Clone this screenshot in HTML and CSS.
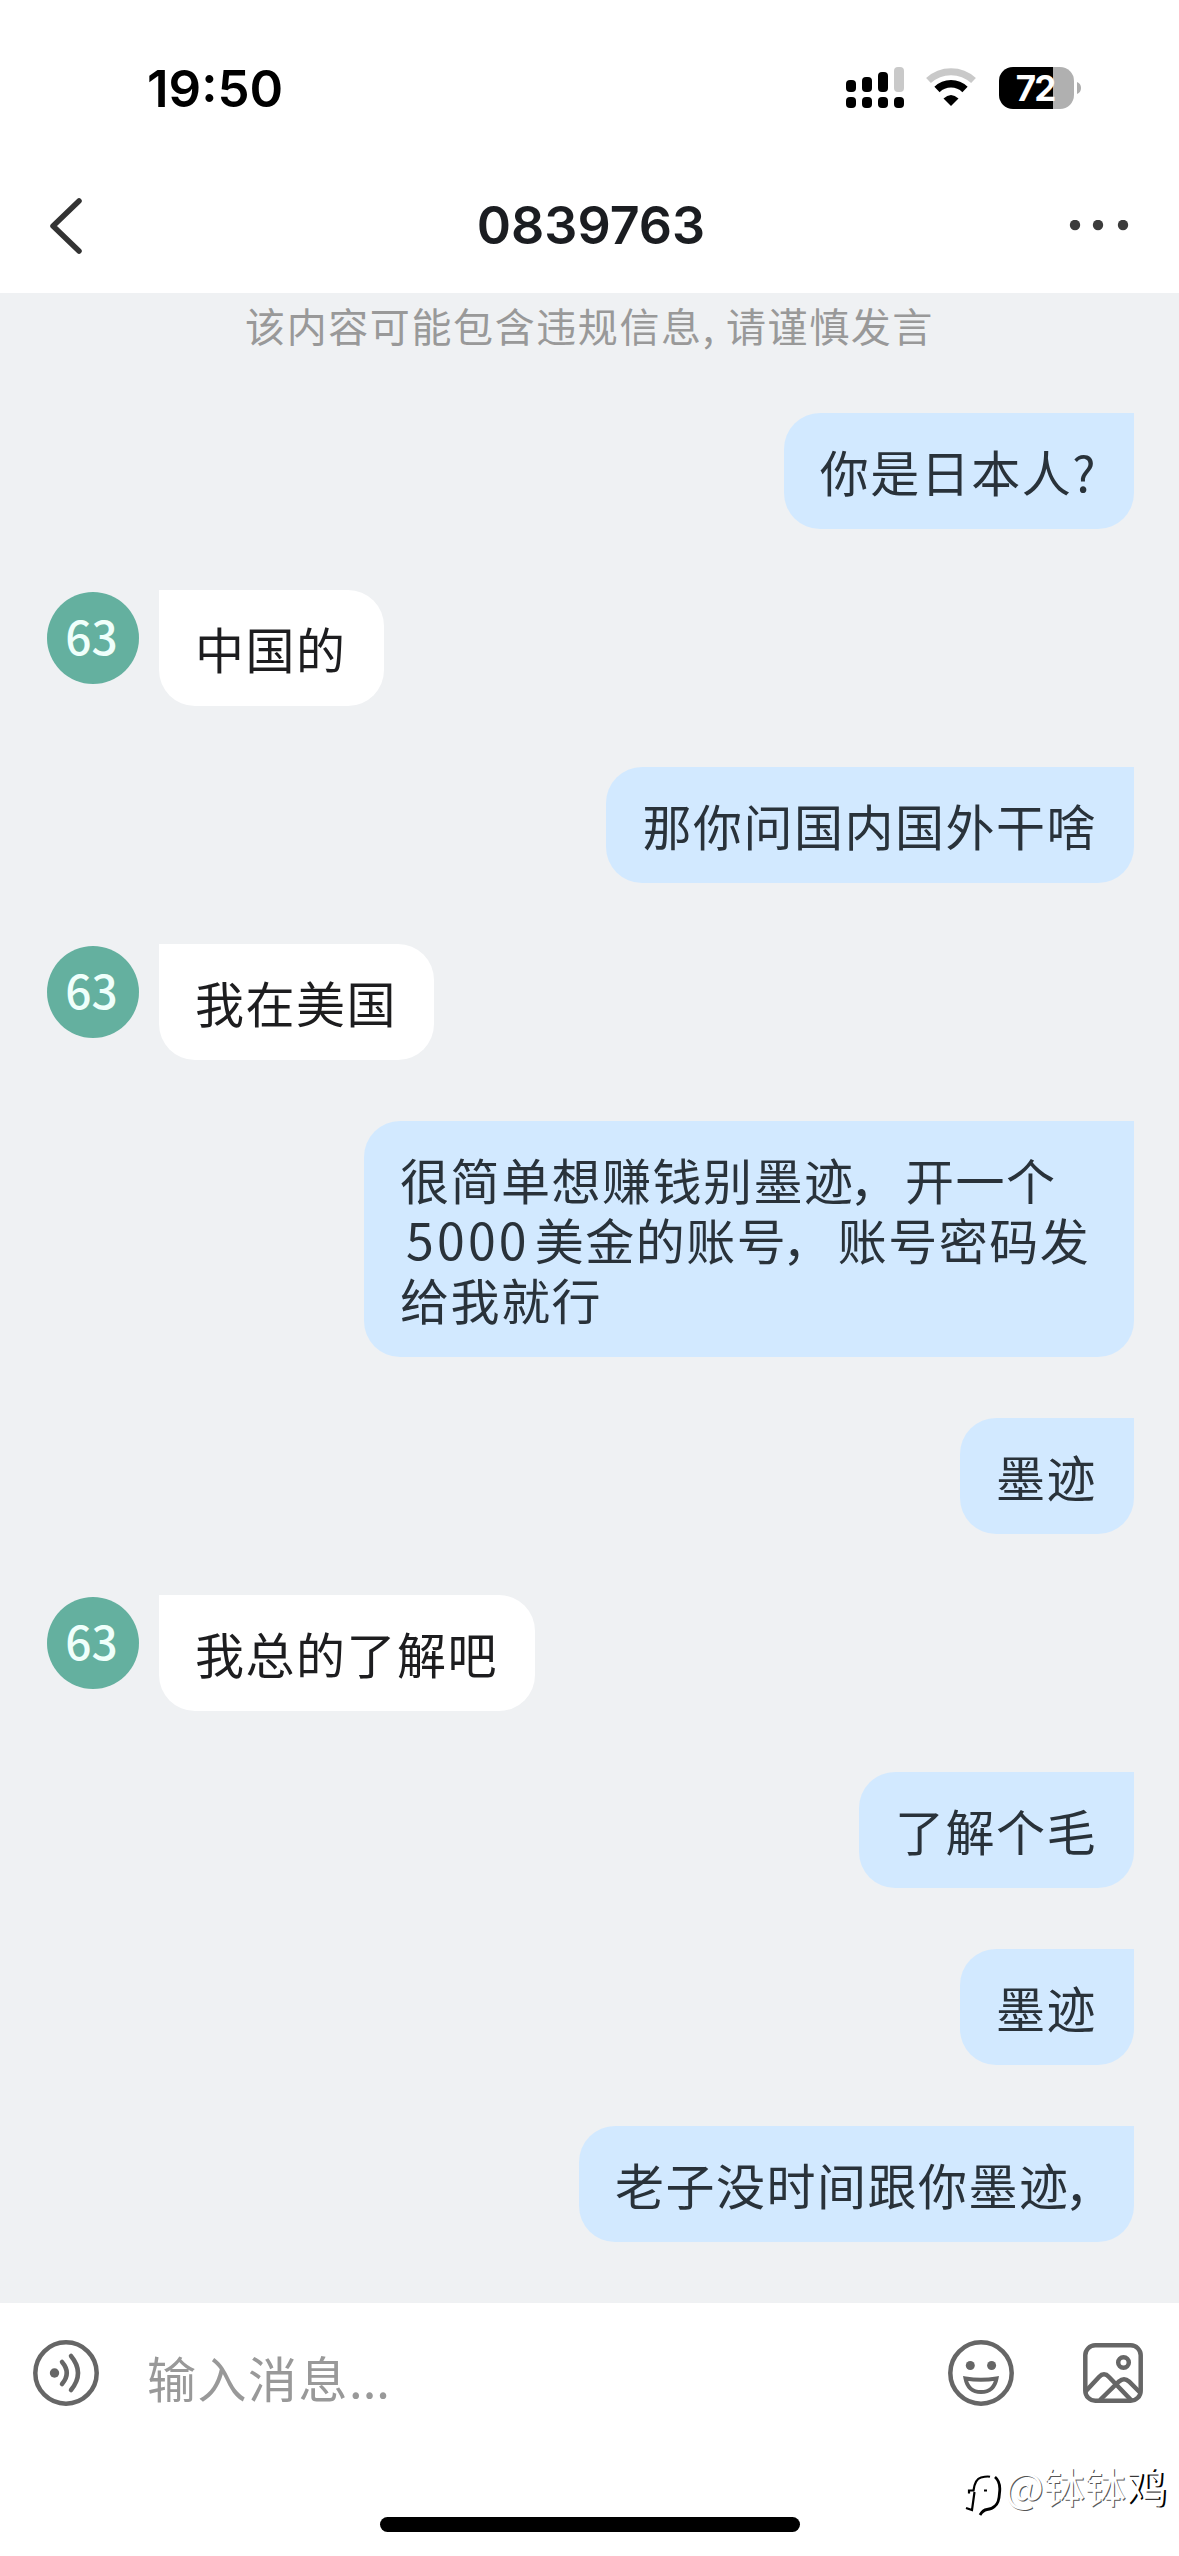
FILE: index.html
```html
<!DOCTYPE html>
<html lang="zh-CN">
<head>
<meta charset="utf-8">
<title>0839763</title>
<link rel="stylesheet" href="styles.css">
</head>
<body>
<div class="phone">
  <div class="status">
    <span class="time">19:50</span>
    <div class="status-icons">
      <svg class="signal" width="58" height="46" viewBox="0 0 58 46">
        <rect x="0" y="14" width="10" height="12" rx="4"/><rect x="16" y="11" width="10" height="15" rx="4"/><rect x="32" y="6" width="10" height="20" rx="4"/><rect x="48" y="1" width="10" height="25" rx="4" fill="#c9c9c9"/>
        <rect x="0" y="31" width="10" height="11" rx="4"/><rect x="16" y="31" width="10" height="11" rx="4"/><rect x="32" y="31" width="10" height="11" rx="4"/><rect x="48" y="31" width="10" height="11" rx="4"/>
      </svg>
      <svg class="wifi" width="50" height="46" viewBox="0 0 50 46" fill="none">
        <path d="M2.500 14.500A33 33 0 0 1 47.500 14.500" stroke="#c9c9c9" stroke-width="7"/>
        <path d="M11 23.500A20 20 0 0 1 39 23.500" stroke="#000" stroke-width="7.500"/>
        <path d="M17.500 32.500Q25 25.500 32.500 32.500L25 40Z" fill="#000"/>
      </svg>
      <div class="battery"><div class="cell"><span>72</span></div><svg width="4" height="12" viewBox="0 0 4 12"><path d="M0 0Q4 1.500 4 6T0 12Z" fill="#adadad"/></svg></div>
    </div>
  </div>
  <header class="nav">
    <svg class="back" width="40" height="64" viewBox="0 0 40 64"><path d="M33 7L7 32L33 57" fill="none" stroke="#333" stroke-width="5.500" stroke-linecap="round" stroke-linejoin="round"/></svg>
    <h1>0839763</h1>
    <svg class="more" width="60" height="12" viewBox="0 0 60 12" fill="#3b3b3b"><circle cx="6" cy="5" r="5.200"/><circle cx="29" cy="5" r="5.200"/><circle cx="54" cy="5" r="5.200"/></svg>
  </header>
  <main class="chat">
    <p class="notice">该内容可能包含违规信息, 请谨慎发言</p>
    <div class="row me"><p class="bubble">你是日本人?</p></div>
    <div class="row"><span class="avatar">63</span><p class="bubble">中国的</p></div>
    <div class="row me"><p class="bubble">那你问国内国外干啥</p></div>
    <div class="row"><span class="avatar">63</span><p class="bubble">我在美国</p></div>
    <div class="row me"><p class="bubble long">很简单想赚钱别墨迹<span class="comma">，</span>开一个<br><span class="num">5000</span>美金的账号<span class="comma">，</span>账号密码发<br>给我就行</p></div>
    <div class="row me"><p class="bubble">墨迹</p></div>
    <div class="row"><span class="avatar">63</span><p class="bubble">我总的了解吧</p></div>
    <div class="row me"><p class="bubble">了解个毛</p></div>
    <div class="row me"><p class="bubble">墨迹</p></div>
    <div class="row me"><p class="bubble last">老子没时间跟你墨迹<span class="comma">，</span></p></div>
  </main>
  <footer class="composer">
    <div class="bar">
      <svg width="66" height="66" viewBox="0 0 66 66" fill="none" stroke="#666" stroke-width="4.500" stroke-linecap="round"><circle cx="33" cy="33" r="30.700"/><circle cx="21.500" cy="33" r="4.700" fill="#666" stroke="none"/><path d="M29 22Q38.500 33 29 44M38 16Q52 33 38 50"/></svg>
      <span class="placeholder">输入消息<span class="dots">...</span></span>
      <svg class="smile" width="66" height="66" viewBox="0 0 66 66" fill="none" stroke="#666" stroke-width="4.500"><circle cx="33" cy="33" r="30.700"/><g fill="#666" stroke="none"><circle cx="22.300" cy="25.500" r="4.500"/><circle cx="43.600" cy="25.500" r="4.500"/></g><path d="M17.500 38.500Q33 41 48.500 38.500Q46 52 33 52T17.500 38.500Z" stroke-width="4"/></svg>
      <svg class="photo" width="60" height="60" viewBox="0 0 60 60" fill="none" stroke="#666" stroke-width="4.500"><rect x="2.300" y="2.300" width="55.400" height="55.400" rx="10"/><circle cx="40.500" cy="19.500" r="5.300"/><path d="M2.500 48.500L16 34Q21 28.500 26 34L48.500 57.500M17 57L36 38.500Q41 34 46 38.500L57.500 50"/></svg>
    </div>
    <div class="home"></div>
  </footer>
  <div class="watermark">
    <svg width="38" height="46" viewBox="0 0 38 46" fill="none" stroke="#000" stroke-width="2.200"><path d="M5 20.500V17.500H9.500Q11 6 17 4.500T26 3.700M20 17.500H23M10.500 19L8 37L2 35"/><path d="M31 4Q37 9 35.500 20Q35 30 31 33Q28 36 23 36.500Q19 37 16 42" stroke-width="2.800"/></svg>
    <span>@钵钵<b>鸡</b></span>
  </div>
</div>
</body>
</html>
```
FILE: styles.css
```css
* { box-sizing: border-box; }
body, p, h1 { margin: 0; }
body { background: #fff; font-family: "Noto Sans CJK SC", "Noto Sans", sans-serif; }
.phone { position: relative; width: 1179px; height: 2556px; display: flex; flex-direction: column; overflow: hidden; }
svg { display: block; flex: none; }

.status { height: 160px; padding: 66px 98px 0 147px; display: flex; justify-content: space-between; align-items: flex-start; }
.time { font: 600 51px/46px Inter, sans-serif; letter-spacing: 0; color: #000; }
.status-icons { display: flex; }
.wifi { margin-left: 22px; }
.battery { display: flex; align-items: center; gap: 3px; height: 42px; margin: 1px 0 0 23px; }
.cell { width: 75px; height: 42px; padding-right: 3px; border-radius: 14px; background: linear-gradient(90deg, #000 54px, #b0b0b0 54px); color: #fff; font: 700 35px/42px Inter, sans-serif; letter-spacing: -2px; text-align: center; }

.nav { height: 133px; padding: 0 50px 1px 46px; display: grid; grid-template-columns: 1fr auto 1fr; align-items: center; }
.nav h1 { padding-left: 7px; font: 600 52px/60px Inter, sans-serif; color: #1b1d21; }
.more { justify-self: end; }

.chat { height: 2010px; background: #eff1f3; display: flex; flex-direction: column; gap: 61px; }
.notice { height: 59px; font-size: 40px; line-height: 64px; letter-spacing: 1.600px; color: #999; text-align: center; white-space: nowrap; }
.row { display: flex; align-items: flex-start; padding: 0 45px 0 47px; }
.row.me { justify-content: flex-end; }
.avatar { width: 92px; height: 92px; margin: 2px 20px 0 0; padding-right: 3px; border-radius: 50%; background: #64b09f; color: #effffb; font-size: 46px; font-weight: 500; line-height: 86px; text-align: center; }
.bubble { padding: 28px 37px 28px 36px; border-radius: 0 36px 36px 36px; background: #fff; color: #1d1d1f; font-size: 49px; line-height: 60px; letter-spacing: 1.500px; white-space: nowrap; }
.me .bubble { background: #d2e9ff; color: #29323a; border-radius: 36px 0 36px 36px; }
.bubble.long { width: 770px; }
.bubble.last { width: 555px; }
.num { margin: 0 5px 0 6px; font-size: 50px; line-height: 50px; letter-spacing: 3.200px; }
.comma { display: inline-block; width: 50.500px; line-height: 50px; text-indent: -5px; }

.composer { flex: 1; display: flex; flex-direction: column; align-items: center; justify-content: space-between; padding: 37px 36px 24px 33px; }
.bar { width: 100%; height: 66px; display: flex; align-items: center; }
.placeholder { flex: 1; margin: 7px 0 0 48px; font-size: 49px; line-height: 66px; letter-spacing: 1.500px; color: #999; }
.dots { letter-spacing: 0; }
.photo { margin-left: 69px; }
.home { width: 420px; height: 15px; margin-left: 4px; border-radius: 8px; background: #000; }

.watermark { position: absolute; left: 964px; top: 2473px; display: flex; align-items: flex-start; color: #fff; font-size: 41px; line-height: 46px; text-shadow: 1px 1px 0 #555; white-space: nowrap; }
.watermark span { margin: -11px 0 0 3px; }
.watermark b { font-weight: 400; text-shadow: 2px 1px 0 #000; }
```
